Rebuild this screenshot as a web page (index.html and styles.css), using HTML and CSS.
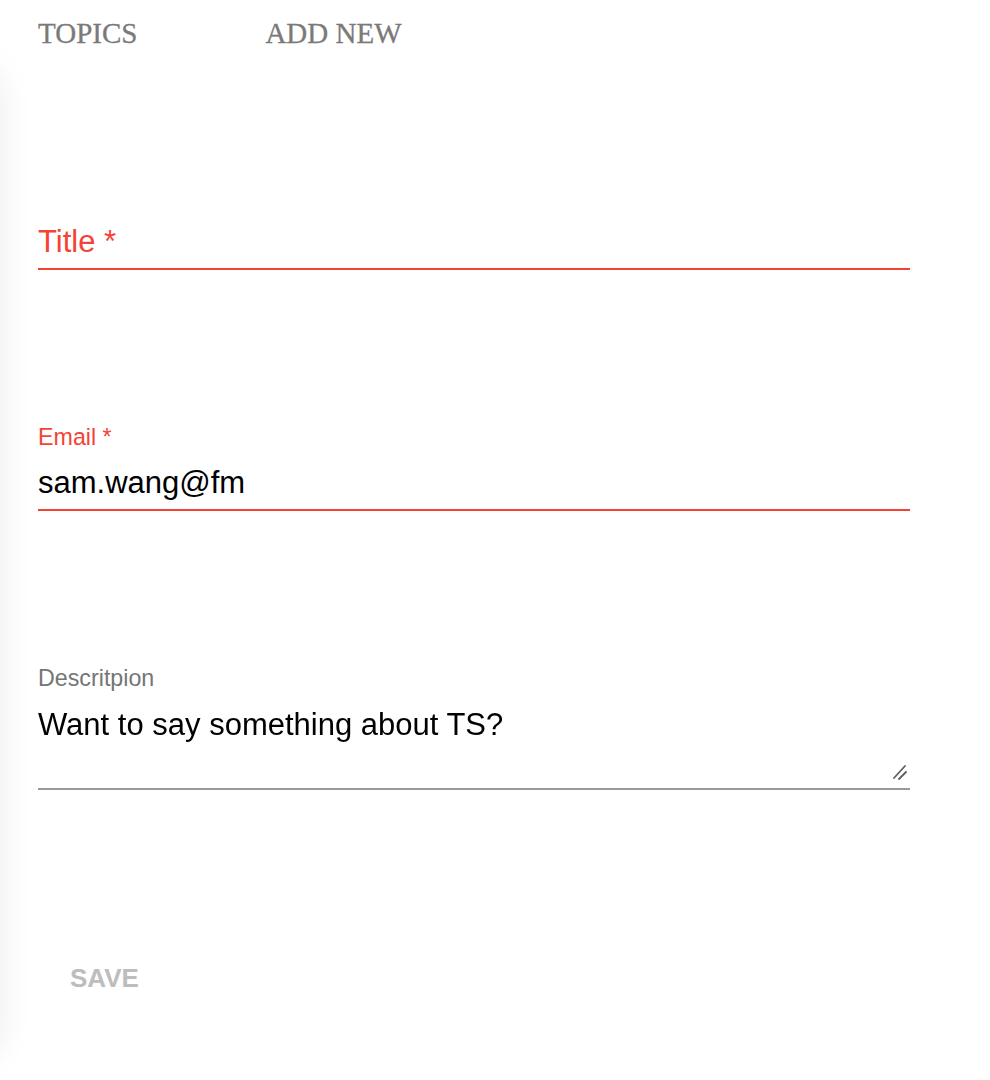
FILE: index.html
```html
<!DOCTYPE html>
<html lang="en">
<head>
<meta charset="utf-8">
<title>Add new topic</title>
<link rel="stylesheet" href="styles.css">
</head>
<body>
<div class="edge-shadow" aria-hidden="true"></div>
<nav class="nav">
  <a class="nav-link" href="#">TOPICS</a>
  <a class="nav-link" href="#">ADD NEW</a>
</nav>
<form class="form">
  <div class="field field-title">
    <div class="input-row error">
      <span class="placeholder-label">Title *</span>
    </div>
  </div>
  <div class="field">
    <label class="label error-text">Email *</label>
    <div class="input-row error">
      <span class="value">sam.wang@fm</span>
    </div>
  </div>
  <div class="field">
    <label class="label muted">Descritpion</label>
    <div class="input-row plain textarea-row">
      <textarea class="textarea">Want to say something about TS?</textarea>
      <svg class="resize-handle" width="16" height="16" viewBox="0 0 16 16" aria-hidden="true">
        <line x1="2" y1="14" x2="13" y2="2" stroke="#5f5f5f" stroke-width="1.8" stroke-linecap="round"/>
        <line x1="7" y1="15" x2="14" y2="8" stroke="#5f5f5f" stroke-width="1.8" stroke-linecap="round"/>
      </svg>
    </div>
  </div>
  <div class="actions">
    <button class="btn" type="button" disabled>SAVE</button>
  </div>
</form>
</body>
</html>
```
FILE: styles.css
```css
html, body {
  margin: 0;
  padding: 0;
  background: #ffffff;
}
body {
  font-family: "Liberation Sans", Arial, sans-serif;
  overflow: hidden;
  height: 1080px;
}
.edge-shadow {
  position: fixed;
  left: -60px;
  top: 64px;
  width: 60px;
  height: 996px;
  border-radius: 30px;
  box-shadow: 0 0 34px rgba(0, 0, 0, 0.08);
}
.nav {
  display: flex;
  padding: 19px 0 0 38px;
  gap: 128px;
}
.nav-link {
  font-family: "Liberation Serif", "Times New Roman", serif;
  font-size: 29px;
  line-height: 29px;
  color: #7a7a7a;
  text-decoration: none;
  -webkit-text-stroke: 0.3px #7a7a7a;
}
.form {
  display: flex;
  flex-direction: column;
  margin-left: 38px;
  width: 872px;
}
.field {
  display: flex;
  flex-direction: column;
  margin-top: 156px;
}
.field-title {
  margin-top: 178px;
}
.label {
  font-size: 23.25px;
  line-height: 23.25px;
  margin-bottom: 18px;
}
.error-text { color: #f44336; }
.muted { color: #757575; }
.input-row {
  font-size: 31px;
  line-height: 31px;
  padding-bottom: 11px;
}
.input-row.error { border-bottom: 2px solid #f44336; }
.input-row.plain {
  border-bottom: 2px solid #999999;
  padding-bottom: 7px;
}
.textarea-row {
  position: relative;
}
.placeholder-label { color: #f44336; }
.value { color: #000000; }
.textarea {
  display: block;
  width: 100%;
  height: 72px;
  box-sizing: border-box;
  margin: 0;
  padding: 0;
  border: none;
  outline: none;
  background: transparent;
  font-family: "Liberation Sans", Arial, sans-serif;
  font-size: 31px;
  line-height: 31px;
  color: #000000;
  resize: none;
}
.resize-handle {
  position: absolute;
  right: 2px;
  bottom: 8px;
}
.actions {
  display: flex;
  margin-top: 175px;
}
.btn {
  font-family: "Liberation Sans", Arial, sans-serif;
  font-size: 26px;
  line-height: 26px;
  font-weight: 700;
  color: #bdbdbd;
  background: transparent;
  border: none;
  padding: 0 32px;
  margin: 0;
}
```
